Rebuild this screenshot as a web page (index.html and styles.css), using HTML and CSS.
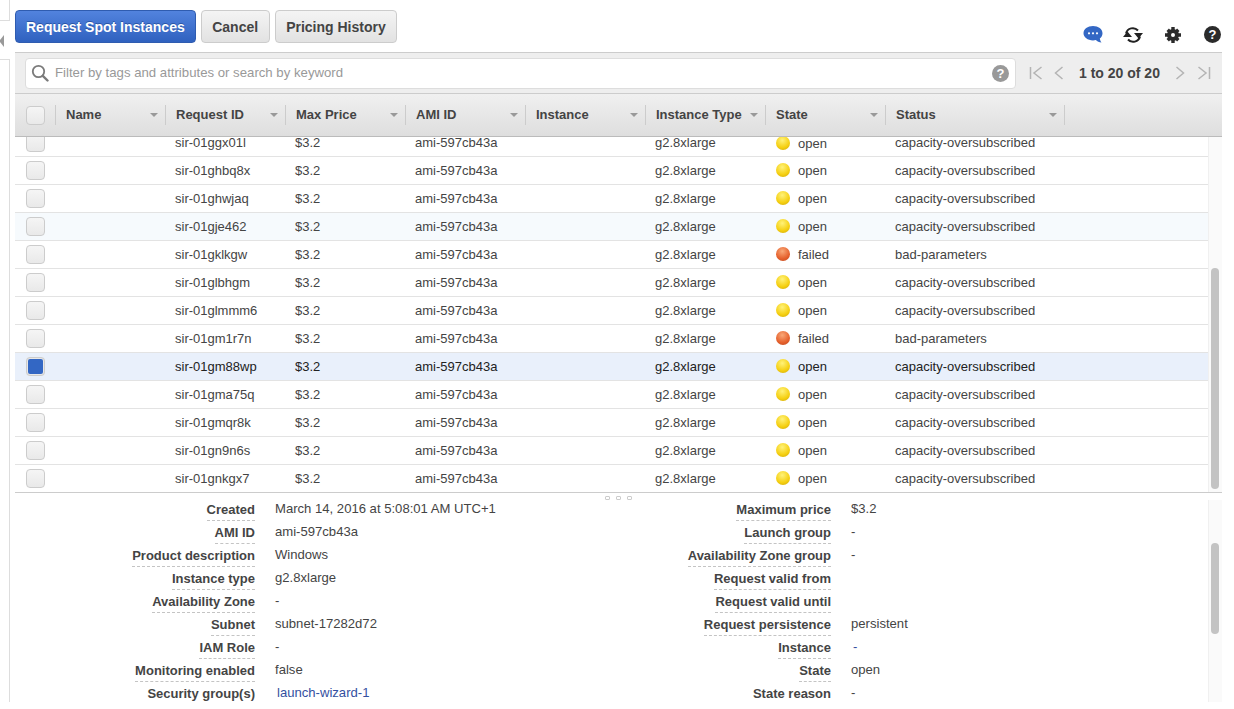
FILE: index.html
```html
<!DOCTYPE html>
<html lang="en">
<head>
    <meta charset="UTF-8">
    <title>Spot Requests</title>
    <link rel="stylesheet" href="styles.css">
</head>
<body>
<div id="pagina">
    <div id="lateral">
        <div class="lateral-topo"></div>
        <div class="lateral-seta"></div>
        <div class="lateral-base"></div>
    </div>
    <div id="principal">
        <div id="barra">
            <button class="botao botao-azul">Request Spot Instances</button>
            <button class="botao">Cancel</button>
            <button class="botao">Pricing History</button>
            <div id="icones">
                <svg width="20" height="19" viewBox="0 0 20 19"><path d="M10 1c5.300 0 9.500 3 9.500 7.300 0 2.200-1 4-2.700 5.200.2 1.500.9 3 1.700 4-2.300-.2-4.300-1-5.600-2.400-.9.200-1.900.3-2.900.3C4.700 15.400.5 12.400.5 8.300.5 4 4.700 1 10 1z" fill="#3367c4"/><circle cx="6" cy="8.300" r="1.100" fill="#fff"/><circle cx="10" cy="8.300" r="1.100" fill="#fff"/><circle cx="14" cy="8.300" r="1.100" fill="#fff"/></svg>
                <svg class="icone-refresh" width="20" height="18" viewBox="0 0 20 18"><path d="M3 7.500A7 7 0 0 1 15 4.500M17 10.500A7 7 0 0 1 5 13.500" fill="none" stroke="#222" stroke-width="2"/><path d="M11 7h9l-4.500 5.500zM0 11h9L4.500 5.500z" fill="#222"/></svg>
                <svg class="icone-engrenagem" width="16" height="16" viewBox="0 0 16 16"><circle cx="8" cy="8" r="4" fill="none" stroke="#2b2b2b" stroke-width="4"/><path d="M6.300 0h3.400v3H6.300zM6.300 13h3.400v3H6.300zM0 6.300h3v3.400H0zM13 6.300h3v3.400h-3zM1.500 3.900l2.400-2.400 2 2-2.400 2.400zM10.100 12.500l2.400-2.400 2 2-2.400 2.400zM12.100 1.500l2.400 2.400-2 2-2.400-2.400zM3.500 10.100l2.400 2.400-2 2-2.400-2.400z" fill="#2b2b2b"/></svg>
                <span class="ajuda ajuda-preta">?</span>
            </div>
        </div>

        <div id="filtro">
            <div id="busca">
                <svg width="18" height="18" viewBox="0 0 18 18"><circle cx="7.500" cy="7.500" r="5.700" fill="none" stroke="#7b7b7b" stroke-width="1.800"/><path d="M11.800 11.800l4.700 4.700" stroke="#7b7b7b" stroke-width="2.400" stroke-linecap="round"/></svg>
                <span id="busca-texto">Filter by tags and attributes or search by keyword</span>
                <span class="ajuda ajuda-cinza">?</span>
            </div>
            <div id="paginacao">
                <svg width="14" height="14" viewBox="0 0 14 14"><path d="M1.500 1v12M12.500 1L5 7l7.500 6" fill="none" stroke="#b4b4b4" stroke-width="1.500"/></svg>
                <svg class="pag-seta" width="10" height="14" viewBox="0 0 10 14"><path d="M8.500 1L1.500 7l7 6" fill="none" stroke="#b4b4b4" stroke-width="1.500"/></svg>
                <span id="pag-texto">1 to 20 of 20</span>
                <svg class="pag-seta2" width="10" height="14" viewBox="0 0 10 14"><path d="M1.500 1l7 6-7 6" fill="none" stroke="#b4b4b4" stroke-width="1.500"/></svg>
                <svg width="14" height="14" viewBox="0 0 14 14"><path d="M12.500 1v12M1.500 1L9 7l-7.500 6" fill="none" stroke="#b4b4b4" stroke-width="1.500"/></svg>
            </div>
        </div>

        <div id="cabecalho">
            <div class="col-check"><span class="caixa"></span></div>
            <div class="col col-nome">Name<i></i></div>
            <div class="col col-normal">Request ID<i></i></div>
            <div class="col col-normal">Max Price<i></i></div>
            <div class="col col-normal">AMI ID<i></i></div>
            <div class="col col-normal">Instance<i></i></div>
            <div class="col col-normal">Instance Type<i></i></div>
            <div class="col col-normal">State<i></i></div>
            <div class="col col-status">Status<i></i></div>
        </div>

        <div id="tabela">
            <div id="linhas">
                <div class="linha primeira"><div class="col-check"><span class="caixa"></span></div><div class="c col-nome"></div><div class="c col-normal">sir-01ggx01l</div><div class="c col-normal">$3.2</div><div class="c col-normal">ami-597cb43a</div><div class="c col-normal"></div><div class="c col-normal">g2.8xlarge</div><div class="c col-normal"><span class="bola amarela"></span>open</div><div class="c col-status">capacity-oversubscribed</div></div>
                <div class="linha"><div class="col-check"><span class="caixa"></span></div><div class="c col-nome"></div><div class="c col-normal">sir-01ghbq8x</div><div class="c col-normal">$3.2</div><div class="c col-normal">ami-597cb43a</div><div class="c col-normal"></div><div class="c col-normal">g2.8xlarge</div><div class="c col-normal"><span class="bola amarela"></span>open</div><div class="c col-status">capacity-oversubscribed</div></div>
                <div class="linha"><div class="col-check"><span class="caixa"></span></div><div class="c col-nome"></div><div class="c col-normal">sir-01ghwjaq</div><div class="c col-normal">$3.2</div><div class="c col-normal">ami-597cb43a</div><div class="c col-normal"></div><div class="c col-normal">g2.8xlarge</div><div class="c col-normal"><span class="bola amarela"></span>open</div><div class="c col-status">capacity-oversubscribed</div></div>
                <div class="linha sobre"><div class="col-check"><span class="caixa"></span></div><div class="c col-nome"></div><div class="c col-normal">sir-01gje462</div><div class="c col-normal">$3.2</div><div class="c col-normal">ami-597cb43a</div><div class="c col-normal"></div><div class="c col-normal">g2.8xlarge</div><div class="c col-normal"><span class="bola amarela"></span>open</div><div class="c col-status">capacity-oversubscribed</div></div>
                <div class="linha"><div class="col-check"><span class="caixa"></span></div><div class="c col-nome"></div><div class="c col-normal">sir-01gklkgw</div><div class="c col-normal">$3.2</div><div class="c col-normal">ami-597cb43a</div><div class="c col-normal"></div><div class="c col-normal">g2.8xlarge</div><div class="c col-normal"><span class="bola vermelha"></span>failed</div><div class="c col-status">bad-parameters</div></div>
                <div class="linha"><div class="col-check"><span class="caixa"></span></div><div class="c col-nome"></div><div class="c col-normal">sir-01glbhgm</div><div class="c col-normal">$3.2</div><div class="c col-normal">ami-597cb43a</div><div class="c col-normal"></div><div class="c col-normal">g2.8xlarge</div><div class="c col-normal"><span class="bola amarela"></span>open</div><div class="c col-status">capacity-oversubscribed</div></div>
                <div class="linha"><div class="col-check"><span class="caixa"></span></div><div class="c col-nome"></div><div class="c col-normal">sir-01glmmm6</div><div class="c col-normal">$3.2</div><div class="c col-normal">ami-597cb43a</div><div class="c col-normal"></div><div class="c col-normal">g2.8xlarge</div><div class="c col-normal"><span class="bola amarela"></span>open</div><div class="c col-status">capacity-oversubscribed</div></div>
                <div class="linha"><div class="col-check"><span class="caixa"></span></div><div class="c col-nome"></div><div class="c col-normal">sir-01gm1r7n</div><div class="c col-normal">$3.2</div><div class="c col-normal">ami-597cb43a</div><div class="c col-normal"></div><div class="c col-normal">g2.8xlarge</div><div class="c col-normal"><span class="bola vermelha"></span>failed</div><div class="c col-status">bad-parameters</div></div>
                <div class="linha selecionada"><div class="col-check"><span class="caixa marcada"></span></div><div class="c col-nome"></div><div class="c col-normal">sir-01gm88wp</div><div class="c col-normal">$3.2</div><div class="c col-normal">ami-597cb43a</div><div class="c col-normal"></div><div class="c col-normal">g2.8xlarge</div><div class="c col-normal"><span class="bola amarela"></span>open</div><div class="c col-status">capacity-oversubscribed</div></div>
                <div class="linha"><div class="col-check"><span class="caixa"></span></div><div class="c col-nome"></div><div class="c col-normal">sir-01gma75q</div><div class="c col-normal">$3.2</div><div class="c col-normal">ami-597cb43a</div><div class="c col-normal"></div><div class="c col-normal">g2.8xlarge</div><div class="c col-normal"><span class="bola amarela"></span>open</div><div class="c col-status">capacity-oversubscribed</div></div>
                <div class="linha"><div class="col-check"><span class="caixa"></span></div><div class="c col-nome"></div><div class="c col-normal">sir-01gmqr8k</div><div class="c col-normal">$3.2</div><div class="c col-normal">ami-597cb43a</div><div class="c col-normal"></div><div class="c col-normal">g2.8xlarge</div><div class="c col-normal"><span class="bola amarela"></span>open</div><div class="c col-status">capacity-oversubscribed</div></div>
                <div class="linha"><div class="col-check"><span class="caixa"></span></div><div class="c col-nome"></div><div class="c col-normal">sir-01gn9n6s</div><div class="c col-normal">$3.2</div><div class="c col-normal">ami-597cb43a</div><div class="c col-normal"></div><div class="c col-normal">g2.8xlarge</div><div class="c col-normal"><span class="bola amarela"></span>open</div><div class="c col-status">capacity-oversubscribed</div></div>
                <div class="linha"><div class="col-check"><span class="caixa"></span></div><div class="c col-nome"></div><div class="c col-normal">sir-01gnkgx7</div><div class="c col-normal">$3.2</div><div class="c col-normal">ami-597cb43a</div><div class="c col-normal"></div><div class="c col-normal">g2.8xlarge</div><div class="c col-normal"><span class="bola amarela"></span>open</div><div class="c col-status">capacity-oversubscribed</div></div>
            </div>
            <div class="trilho"><div class="polegar polegar-tabela"></div></div>
        </div>

        <div id="detalhes">
            <div id="alca"><b></b><b></b><b></b></div>
            <div id="detalhes-corpo">
                <div class="det-col">
                    <div class="det"><span class="rotulo">Created</span><span class="valor">March 14, 2016 at 5:08:01 AM UTC+1</span></div>
                    <div class="det"><span class="rotulo">AMI ID</span><span class="valor">ami-597cb43a</span></div>
                    <div class="det"><span class="rotulo">Product description</span><span class="valor">Windows</span></div>
                    <div class="det"><span class="rotulo">Instance type</span><span class="valor">g2.8xlarge</span></div>
                    <div class="det"><span class="rotulo">Availability Zone</span><span class="valor">-</span></div>
                    <div class="det"><span class="rotulo">Subnet</span><span class="valor">subnet-17282d72</span></div>
                    <div class="det"><span class="rotulo">IAM Role</span><span class="valor">-</span></div>
                    <div class="det"><span class="rotulo">Monitoring enabled</span><span class="valor">false</span></div>
                    <div class="det"><span class="rotulo">Security group(s)</span><a class="valor link">launch-wizard-1</a></div>
                </div>
                <div class="det-col">
                    <div class="det"><span class="rotulo">Maximum price</span><span class="valor">$3.2</span></div>
                    <div class="det"><span class="rotulo">Launch group</span><span class="valor">-</span></div>
                    <div class="det"><span class="rotulo">Availability Zone group</span><span class="valor">-</span></div>
                    <div class="det"><span class="rotulo">Request valid from</span><span class="valor"></span></div>
                    <div class="det"><span class="rotulo">Request valid until</span><span class="valor"></span></div>
                    <div class="det"><span class="rotulo">Request persistence</span><span class="valor">persistent</span></div>
                    <div class="det"><span class="rotulo">Instance</span><a class="valor link">-</a></div>
                    <div class="det"><span class="rotulo">State</span><span class="valor">open</span></div>
                    <div class="det"><span class="rotulo">State reason</span><span class="valor">-</span></div>
                </div>
                <div class="trilho"><div class="polegar polegar-det"></div></div>
            </div>
        </div>
    </div>
</div>
</body>
</html>
```

FILE: styles.css
```css
*{
    box-sizing: border-box;
}
html, body{
    margin: 0;
    height: 100%;
    overflow: hidden;
    background-color: #fff;
}
body{
    font-family: "Liberation Sans", Arial, Helvetica, sans-serif;
    font-size: 13px;
    color: #444;
}
#pagina{
    display: flex;
    height: 702px;
}

/* resto do menu lateral */
#lateral{
    width: 15px;
    flex-shrink: 0;
}
.lateral-topo{
    width: 10px;
    height: 21px;
    border-right: 1px solid #ddd;
    border-bottom: 1px solid #ddd;
}
.lateral-seta{
    width: 0;
    height: 12px;
    margin-top: 14px;
    border-top: 5px solid transparent;
    border-bottom: 5px solid transparent;
    border-right: 4px solid #999;
}
.lateral-base{
    width: 10px;
    height: 643px;
    margin-top: 12px;
    border-right: 1px solid #ddd;
    border-top: 1px solid #ddd;
}

#principal{
    width: 1207px;
    flex-shrink: 0;
}

/* botoes */
#barra{
    display: flex;
    align-items: flex-start;
    height: 52px;
    padding-top: 10px;
}
.botao{
    height: 33px;
    padding: 0 10.5px;
    margin-right: 5px;
    border: 1px solid #ccc;
    border-radius: 4px;
    background: linear-gradient(#f4f4f4, #e2e2e2);
    font-family: inherit;
    font-size: 14px;
    font-weight: 700;
    color: #444;
}
.botao-azul{
    padding: 0 10px;
    border-color: #2f5cb0;
    background: linear-gradient(#5283de, #2f61bf);
    color: #fff;
    text-shadow: 0 -1px 0 #2a55a6;
}
#icones{
    display: flex;
    align-items: center;
    margin-left: auto;
    margin-top: 15px;
    padding-right: 1px;
}
.icone-refresh{
    margin-left: 20px;
}
.icone-engrenagem{
    margin-left: 22px;
}
.ajuda{
    display: flex;
    align-items: center;
    justify-content: center;
    width: 17px;
    height: 17px;
    border-radius: 50%;
    color: #fff;
    font-weight: 700;
    font-size: 13px;
}
.ajuda-preta{
    margin-left: 23px;
    background-color: #2b2b2b;
}
.ajuda-cinza{
    background-color: #999;
    margin-left: auto;
}

/* filtro e paginacao */
#filtro{
    display: flex;
    align-items: center;
    height: 42px;
    padding-left: 10px;
    background-color: #eee;
    border-top: 1px solid #ccc;
    border-bottom: 1px solid #ccc;
}
#busca{
    display: flex;
    align-items: center;
    width: 991px;
    height: 31px;
    padding: 0 6px 0 5px;
    background-color: #fff;
    border: 1px solid #ddd;
    border-radius: 4px;
}
#busca-texto{
    margin-left: 6px;
    margin-bottom: 2px;
    color: #999;
    font-size: 13.2px;
}
#paginacao{
    display: flex;
    align-items: center;
    margin-left: 13px;
}
.pag-seta{
    margin-left: 11px;
}
#pag-texto{
    margin: 0 15px;
    font-weight: 700;
    font-size: 14px;
    color: #444;
}
.pag-seta2{
    margin-right: 12px;
}

/* colunas */
#cabecalho, .linha{
    display: flex;
}
.col-check{
    width: 40px;
    flex-shrink: 0;
    display: flex;
    align-items: center;
    padding-left: 11px;
}
.col-nome{
    width: 110px;
    flex-shrink: 0;
}
.col-normal{
    width: 120px;
    flex-shrink: 0;
}
.col-status{
    width: 180px;
    flex-shrink: 0;
}

#cabecalho{
    align-items: center;
    height: 42px;
    background: linear-gradient(#f0f0f0, #dedede);
    box-shadow: 0 1px 0 #bbb;
    position: relative;
}
.col{
    position: relative;
    height: 20px;
    line-height: 20px;
    padding-left: 10px;
    font-weight: 700;
    color: #444;
    border-left: 1px solid #ccc;
}
.col.col-status{
    border-right: 1px solid #ccc;
}
.col i{
    position: absolute;
    right: 7px;
    top: 8px;
    border-top: 4px solid #999;
    border-left: 4px solid transparent;
    border-right: 4px solid transparent;
}

/* linhas */
#tabela{
    display: flex;
    height: 356px;
    overflow: hidden;
}
#linhas{
    width: 1193px;
    flex-shrink: 0;
}
.linha{
    height: 28px;
    border-bottom: 1px solid #e3e3e3;
}
.linha:last-child{
    height: 27px;
    border-bottom: 0;
}
/* primeira linha cortada pela rolagem */
.primeira{
    height: 21px;
}
.primeira .c{
    line-height: 14px;
}
.primeira .col-check{
    align-items: flex-end;
    padding-bottom: 4px;
}
.sobre{
    background-color: #f6fafd;
}
.selecionada{
    background-color: #e9f0fb;
    color: #222;
}
.c{
    line-height: 27px;
    padding-left: 10px;
    white-space: nowrap;
}
.caixa{
    display: block;
    width: 19px;
    height: 19px;
    flex-shrink: 0;
    background: linear-gradient(#f5f5f5, #e9e9e9);
    border: 1px solid #ccc;
    border-radius: 4px;
}
.marcada{
    background: #3367c4;
    border: 2px solid #e8e8e8;
    outline: 1px solid #ccc;
    outline-offset: -1px;
}
.bola{
    display: inline-block;
    width: 14px;
    height: 14px;
    margin: 0 8px 0 1px;
    border-radius: 50%;
    vertical-align: -2px;
}
.amarela{
    background: radial-gradient(circle at 45% 30%, #fff27a, #f5cf10 60%, #c9a20a);
}
.vermelha{
    background: radial-gradient(circle at 45% 30%, #f9a878, #e5602c 60%, #b9471d);
}

/* barras de rolagem */
.trilho{
    width: 14px;
    flex-shrink: 0;
    background-color: #fafafa;
    border-left: 1px solid #f0f0f0;
    padding: 0 3px 0 2px;
}
.polegar{
    background-color: #c3c3c3;
    border-radius: 4px;
}
.polegar-tabela{
    height: 221px;
    margin-top: 132px;
}
.polegar-det{
    height: 91px;
    margin-top: 43px;
}

/* detalhes */
#detalhes{
    height: 210px;
    border-top: 1px solid #ccc;
    overflow: hidden;
}
#alca{
    display: flex;
    justify-content: center;
    gap: 6px;
    height: 7px;
    padding-top: 3px;
}
#alca b{
    width: 5px;
    height: 4px;
    border: 1px solid #ccc;
    border-radius: 1px;
}
#detalhes-corpo{
    display: flex;
    height: 202px;
}
.det-col{
    width: 576px;
    flex-shrink: 0;
    margin-top: 1px;
}
.det-col + .det-col{
    width: 617px;
}
.det{
    display: grid;
    grid-template-columns: 240px 1fr;
    align-items: start;
    height: 23px;
}
.rotulo{
    justify-self: end;
    height: 20px;
    font-weight: 700;
    color: #444;
    line-height: 18px;
    white-space: nowrap;
    border-bottom: 1px dashed #c4c4c4;
}
.valor{
    margin-left: 20px;
    font-size: 13.1px;
    line-height: 16px;
}
.link{
    margin-left: 22px;
    color: #34509f;
}
```
